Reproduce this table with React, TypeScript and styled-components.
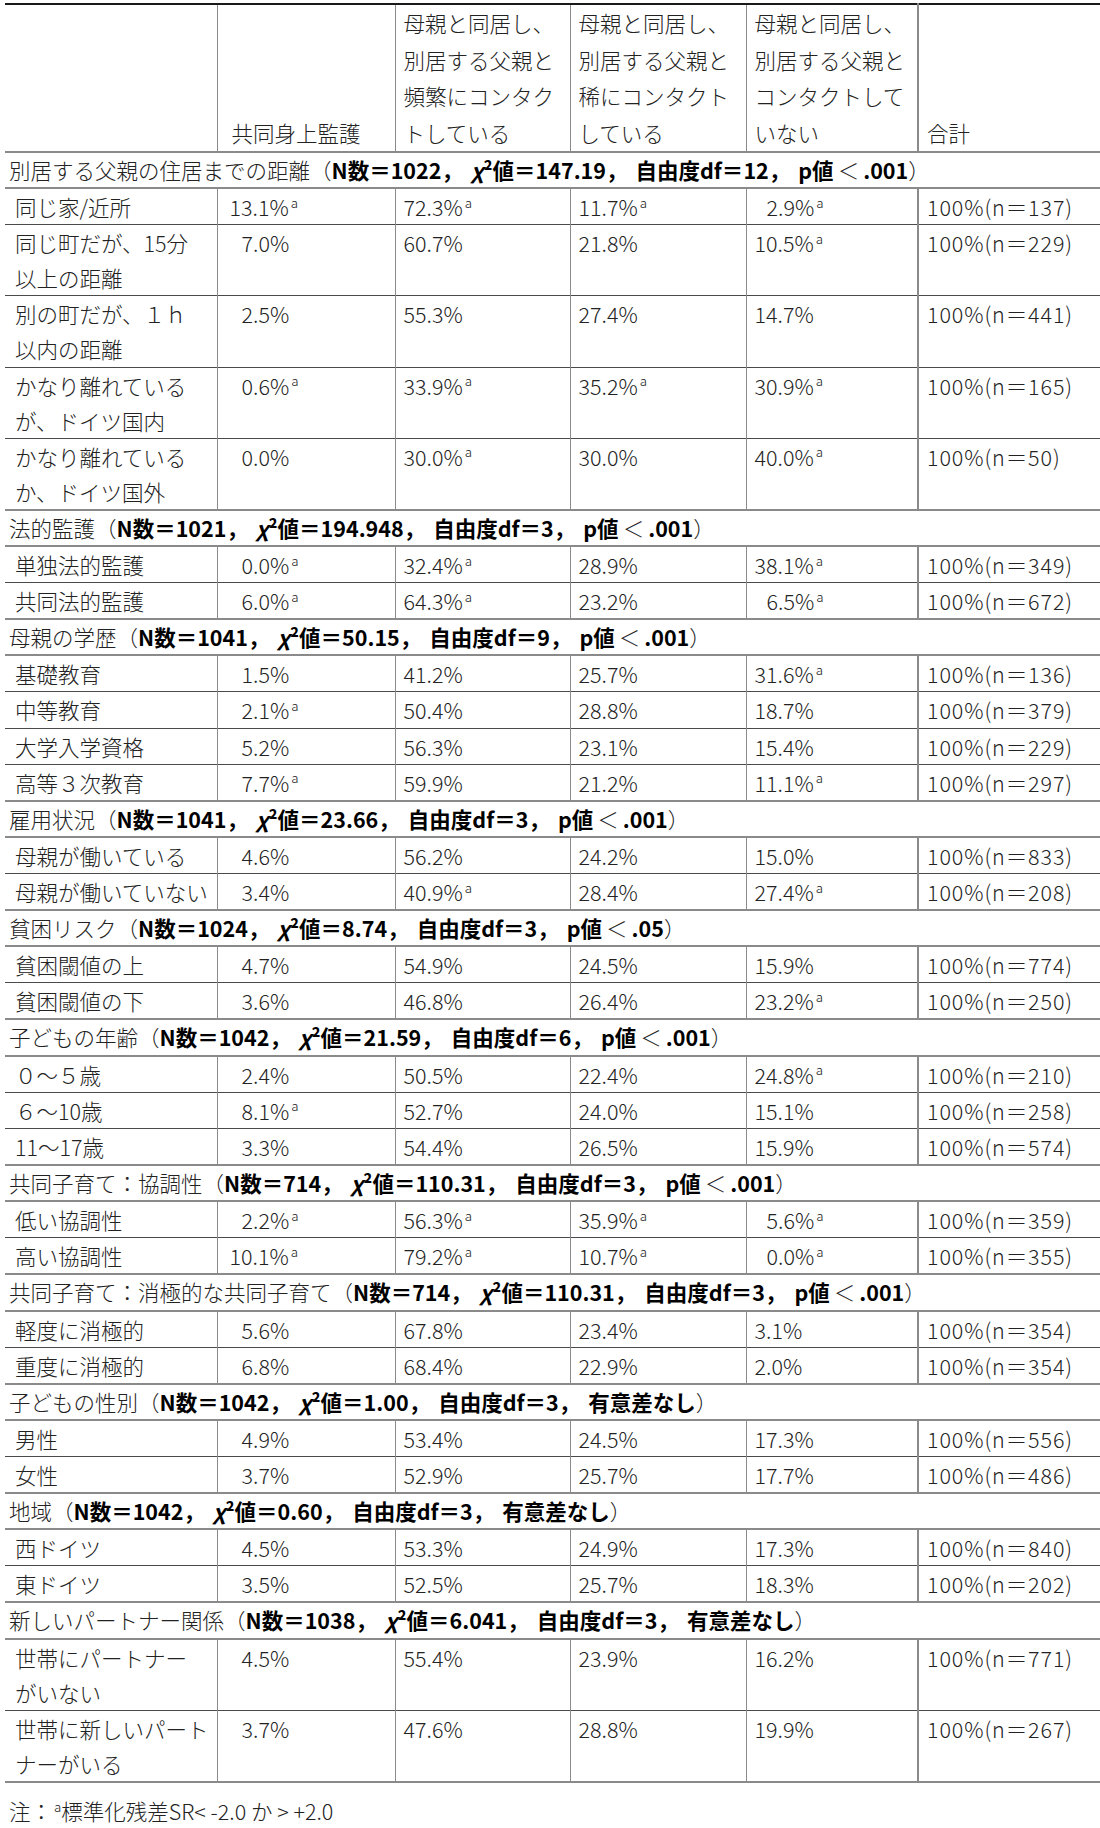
import React from 'react';
import styled, { createGlobalStyle } from 'styled-components';

const GlobalStyle = createGlobalStyle`
  body {
    margin: 0;
    background: #fff;
  }
`;

type Cell = { v: string; a?: boolean; ind?: boolean };
type Row = { label: string[]; cells: Cell[]; n: number };
type Section = { title: string; n: number; chi: string; df: number; p?: string; rows: Row[] };

const c = (v: string, a = false, ind = false): Cell => ({ v, a, ind });

const sections: Section[] = [
  {
    title: '別居する父親の住居までの距離', n: 1022, chi: '147.19', df: 12, p: '.001',
    rows: [
      { label: ['同じ家/近所'], cells: [c('13.1%', true), c('72.3%', true), c('11.7%', true), c('2.9%', true, true)], n: 137 },
      { label: ['同じ町だが、15分', '以上の距離'], cells: [c('7.0%'), c('60.7%'), c('21.8%'), c('10.5%', true)], n: 229 },
      { label: ['別の町だが、１ｈ', '以内の距離'], cells: [c('2.5%'), c('55.3%'), c('27.4%'), c('14.7%')], n: 441 },
      { label: ['かなり離れている', 'が、ドイツ国内'], cells: [c('0.6%', true), c('33.9%', true), c('35.2%', true), c('30.9%', true)], n: 165 },
      { label: ['かなり離れている', 'か、ドイツ国外'], cells: [c('0.0%'), c('30.0%', true), c('30.0%'), c('40.0%', true)], n: 50 },
    ],
  },
  {
    title: '法的監護', n: 1021, chi: '194.948', df: 3, p: '.001',
    rows: [
      { label: ['単独法的監護'], cells: [c('0.0%', true), c('32.4%', true), c('28.9%'), c('38.1%', true)], n: 349 },
      { label: ['共同法的監護'], cells: [c('6.0%', true), c('64.3%', true), c('23.2%'), c('6.5%', true, true)], n: 672 },
    ],
  },
  {
    title: '母親の学歴', n: 1041, chi: '50.15', df: 9, p: '.001',
    rows: [
      { label: ['基礎教育'], cells: [c('1.5%'), c('41.2%'), c('25.7%'), c('31.6%', true)], n: 136 },
      { label: ['中等教育'], cells: [c('2.1%', true), c('50.4%'), c('28.8%'), c('18.7%')], n: 379 },
      { label: ['大学入学資格'], cells: [c('5.2%'), c('56.3%'), c('23.1%'), c('15.4%')], n: 229 },
      { label: ['高等３次教育'], cells: [c('7.7%', true), c('59.9%'), c('21.2%'), c('11.1%', true)], n: 297 },
    ],
  },
  {
    title: '雇用状況', n: 1041, chi: '23.66', df: 3, p: '.001',
    rows: [
      { label: ['母親が働いている'], cells: [c('4.6%'), c('56.2%'), c('24.2%'), c('15.0%')], n: 833 },
      { label: ['母親が働いていない'], cells: [c('3.4%'), c('40.9%', true), c('28.4%'), c('27.4%', true)], n: 208 },
    ],
  },
  {
    title: '貧困リスク', n: 1024, chi: '8.74', df: 3, p: '.05',
    rows: [
      { label: ['貧困閾値の上'], cells: [c('4.7%'), c('54.9%'), c('24.5%'), c('15.9%')], n: 774 },
      { label: ['貧困閾値の下'], cells: [c('3.6%'), c('46.8%'), c('26.4%'), c('23.2%', true)], n: 250 },
    ],
  },
  {
    title: '子どもの年齢', n: 1042, chi: '21.59', df: 6, p: '.001',
    rows: [
      { label: ['０～５歳'], cells: [c('2.4%'), c('50.5%'), c('22.4%'), c('24.8%', true)], n: 210 },
      { label: ['６～10歳'], cells: [c('8.1%', true), c('52.7%'), c('24.0%'), c('15.1%')], n: 258 },
      { label: ['11～17歳'], cells: [c('3.3%'), c('54.4%'), c('26.5%'), c('15.9%')], n: 574 },
    ],
  },
  {
    title: '共同子育て：協調性', n: 714, chi: '110.31', df: 3, p: '.001',
    rows: [
      { label: ['低い協調性'], cells: [c('2.2%', true), c('56.3%', true), c('35.9%', true), c('5.6%', true, true)], n: 359 },
      { label: ['高い協調性'], cells: [c('10.1%', true), c('79.2%', true), c('10.7%', true), c('0.0%', true, true)], n: 355 },
    ],
  },
  {
    title: '共同子育て：消極的な共同子育て', n: 714, chi: '110.31', df: 3, p: '.001',
    rows: [
      { label: ['軽度に消極的'], cells: [c('5.6%'), c('67.8%'), c('23.4%'), c('3.1%')], n: 354 },
      { label: ['重度に消極的'], cells: [c('6.8%'), c('68.4%'), c('22.9%'), c('2.0%')], n: 354 },
    ],
  },
  {
    title: '子どもの性別', n: 1042, chi: '1.00', df: 3,
    rows: [
      { label: ['男性'], cells: [c('4.9%'), c('53.4%'), c('24.5%'), c('17.3%')], n: 556 },
      { label: ['女性'], cells: [c('3.7%'), c('52.9%'), c('25.7%'), c('17.7%')], n: 486 },
    ],
  },
  {
    title: '地域', n: 1042, chi: '0.60', df: 3,
    rows: [
      { label: ['西ドイツ'], cells: [c('4.5%'), c('53.3%'), c('24.9%'), c('17.3%')], n: 840 },
      { label: ['東ドイツ'], cells: [c('3.5%'), c('52.5%'), c('25.7%'), c('18.3%')], n: 202 },
    ],
  },
  {
    title: '新しいパートナー関係', n: 1038, chi: '6.041', df: 3,
    rows: [
      { label: ['世帯にパートナー', 'がいない'], cells: [c('4.5%'), c('55.4%'), c('23.9%'), c('16.2%')], n: 771 },
      { label: ['世帯に新しいパート', 'ナーがいる'], cells: [c('3.7%'), c('47.6%'), c('28.8%'), c('19.9%')], n: 267 },
    ],
  },
];

const headers: string[][] = [
  ['共同身上監護'],
  ['母親と同居し、', '別居する父親と', '頻繁にコンタク', 'トしている'],
  ['母親と同居し、', '別居する父親と', '稀にコンタクト', 'している'],
  ['母親と同居し、', '別居する父親と', 'コンタクトして', 'いない'],
  ['合計'],
];

const colWidths = [212, 178, 175, 176, 172, 182];

const Page = styled.div`
  padding: 3px 0 0 5px;
  font-family: "Noto Sans CJK JP", "Noto Sans", sans-serif;
  font-weight: 300;
  font-size: 21.5px;
  color: #222;
`;

const Table = styled.table`
  width: 1095px;
  border-collapse: collapse;
  table-layout: fixed;
  border-top: 2px solid #1a1a1a;
  border-bottom: 2px solid #8a8a8a;
`;

const Col = styled.col<{ $w: number }>`
  width: ${p => p.$w}px;
`;

const HeadRow = styled.tr`
  height: 145px;
`;

const HeadCell = styled.th<{ $col: number }>`
  font-weight: 300;
  text-align: left;
  vertical-align: bottom;
  line-height: 36.5px;
  padding: 0 0 0 ${p => (p.$col === 1 ? 14 : 8)}px;
  white-space: nowrap;
  border-bottom: 2px solid #8a8a8a;
  border-left: ${p => (p.$col === 0 ? 'none' : p.$col === 5 ? '2px solid #8a8a8a' : '1px solid #8a8a8a')};
`;

const SectionCell = styled.td`
  line-height: 34.3px;
  padding: 0 0 0 4px;
  white-space: nowrap;
  border-top: 2px solid #8a8a8a;
  border-bottom: 2px solid #8a8a8a;
`;

const Strong = styled.span`
  font-weight: 700;
  color: #000;
`;

const Chi = styled.span`
  font-style: italic;
  margin-left: 8px;
`;

const Gap = styled.span`
  margin-left: 8px;
`;

const Lt = styled.span`
  margin: 0 4px;
`;

const DataRow = styled.tr`
  border-bottom: 1px solid #4a4a4a;
`;

const DataCell = styled.td<{ $col: number }>`
  line-height: 35.05px;
  vertical-align: top;
  white-space: nowrap;
  padding: 0 0 0 ${p => (p.$col === 0 ? 10 : p.$col === 1 ? 12 : 8)}px;
  border-left: ${p => (p.$col === 0 ? 'none' : p.$col === 5 ? '2px solid #8a8a8a' : '1px solid #8a8a8a')};
`;

const Total = styled.span`
  letter-spacing: 0.9px;
`;

const Value = styled.span<{ $indent: boolean }>`
  padding-left: ${p => (p.$indent ? '0.56em' : '0')};
`;

const Sup = styled.span`
  font-size: 0.62em;
  vertical-align: 0.62em;
  line-height: 0;
  margin-left: 2px;
`;

const Note = styled.div`
  margin-top: 10px;
  padding-left: 4px;
  line-height: 36px;
`;

const SectionTitle: React.FC<{ s: Section }> = ({ s }) => (
  <>
    {s.title}（
    <Strong>
      N数＝{s.n}，<Chi>χ</Chi>²値＝{s.chi}，<Gap>自由度df＝{s.df}，</Gap>
      <Gap>{s.p ? 'p値' : '有意差なし'}</Gap>
    </Strong>
    {s.p && (
      <>
        <Lt>＜</Lt>
        <Strong>{s.p}</Strong>
      </>
    )}
    ）
  </>
);

const Lines: React.FC<{ lines: string[] }> = ({ lines }) => (
  <>
    {lines.map((l, i) => (
      <React.Fragment key={i}>
        {i > 0 && <br />}
        {l}
      </React.Fragment>
    ))}
  </>
);

export default function App() {
  return (
    <Page>
      <GlobalStyle />
      <Table>
        <colgroup>
          {colWidths.map((w, i) => (
            <Col key={i} $w={w} />
          ))}
        </colgroup>
        <thead>
          <HeadRow>
            <HeadCell $col={0} />
            {headers.map((h, i) => (
              <HeadCell key={i} $col={i + 1}>
                <Lines lines={h} />
              </HeadCell>
            ))}
          </HeadRow>
        </thead>
        <tbody>
          {sections.map((s, si) => (
            <React.Fragment key={si}>
              <tr>
                <SectionCell colSpan={6}>
                  <SectionTitle s={s} />
                </SectionCell>
              </tr>
              {s.rows.map((r, ri) => (
                <DataRow key={ri}>
                  <DataCell $col={0}>
                    <Lines lines={r.label} />
                  </DataCell>
                  {r.cells.map((cell, ci) => (
                    <DataCell key={ci} $col={ci + 1}>
                      <Value $indent={ci === 0 ? parseFloat(cell.v) < 10 : !!cell.ind}>
                        {cell.v}
                        {cell.a && <Sup>a</Sup>}
                      </Value>
                    </DataCell>
                  ))}
                  <DataCell $col={5}>
                    <Total>100%(n＝{r.n})</Total>
                  </DataCell>
                </DataRow>
              ))}
            </React.Fragment>
          ))}
        </tbody>
      </Table>
      <Note>
        注：<Sup>a</Sup>標準化残差SR&lt; -2.0 か &gt; +2.0
      </Note>
    </Page>
  );
}
